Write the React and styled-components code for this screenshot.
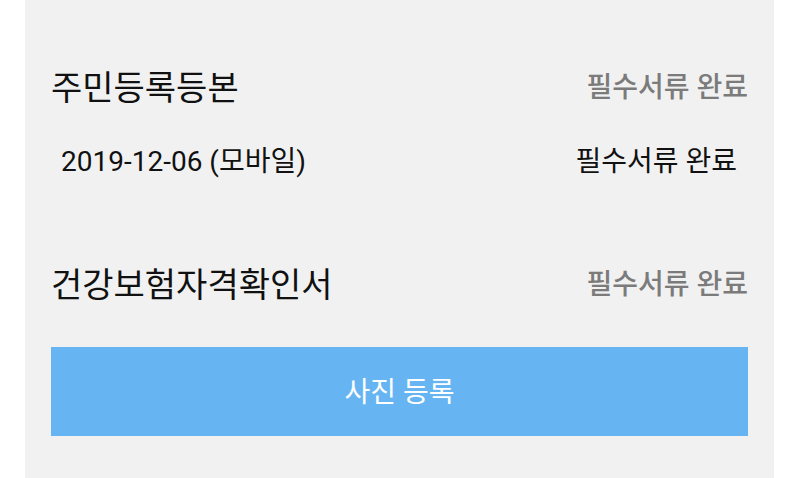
import React from "react";
import styled, { createGlobalStyle } from "styled-components";

const GlobalStyle = createGlobalStyle`
  html, body {
    margin: 0;
    padding: 0;
    background: #ffffff;
  }

  body {
    font-family: Roboto, "Noto Sans CJK KR", "Noto Sans", sans-serif;
    color: #111111;
  }
`;

const Page = styled.div`
  height: 478px;
  overflow: hidden;
  padding: 0 26px 0 25px;
`;

const Panel = styled.div`
  min-height: 100%;
  background: #f1f1f1;
  padding: 58px 26px 40px 26px;
  box-sizing: border-box;
`;

const Section = styled.section`
  & + & {
    margin-top: 63px;
  }
`;

const DocHeader = styled.div`
  display: flex;
  align-items: center;
  justify-content: space-between;
  height: 60px;
`;

const DocTitle = styled.h3`
  margin: 0;
  font-size: 34px;
  font-weight: 400;
  line-height: 1;
  color: #111111;
`;

const Status = styled.span`
  font-size: 28px;
  line-height: 1;
  font-weight: ${({ $muted }) => ($muted ? 500 : 400)};
  color: ${({ $muted }) => ($muted ? "#7b7b7b" : "#111111")};
`;

const SubRow = styled.div`
  display: flex;
  align-items: center;
  justify-content: space-between;
  height: 60px;
  margin-top: 14px;
  padding: 0 11px 0 10px;
`;

const SubDate = styled.span`
  font-size: 28px;
  line-height: 1;
  color: #111111;
`;

const UploadButton = styled.button`
  display: flex;
  align-items: center;
  justify-content: center;
  width: 100%;
  height: 89px;
  margin-top: 32px;
  padding: 0 0 4px 0;
  border: none;
  border-radius: 0;
  background: #66b5f2;
  color: #ffffff;
  font-family: inherit;
  font-size: 28px;
  cursor: pointer;
`;

const documents = [
  {
    title: "주민등록등본",
    status: "필수서류 완료",
    files: [{ date: "2019-12-06 (모바일)", status: "필수서류 완료" }],
  },
  {
    title: "건강보험자격확인서",
    status: "필수서류 완료",
    files: [],
  },
];

export default function App() {
  return (
    <>
      <GlobalStyle />
      <Page>
        <Panel>
          {documents.map((doc) => (
            <Section key={doc.title}>
              <DocHeader>
                <DocTitle>{doc.title}</DocTitle>
                <Status $muted>{doc.status}</Status>
              </DocHeader>
              {doc.files.map((file) => (
                <SubRow key={file.date}>
                  <SubDate>{file.date}</SubDate>
                  <Status>{file.status}</Status>
                </SubRow>
              ))}
            </Section>
          ))}
          <UploadButton type="button">사진 등록</UploadButton>
        </Panel>
      </Page>
    </>
  );
}
